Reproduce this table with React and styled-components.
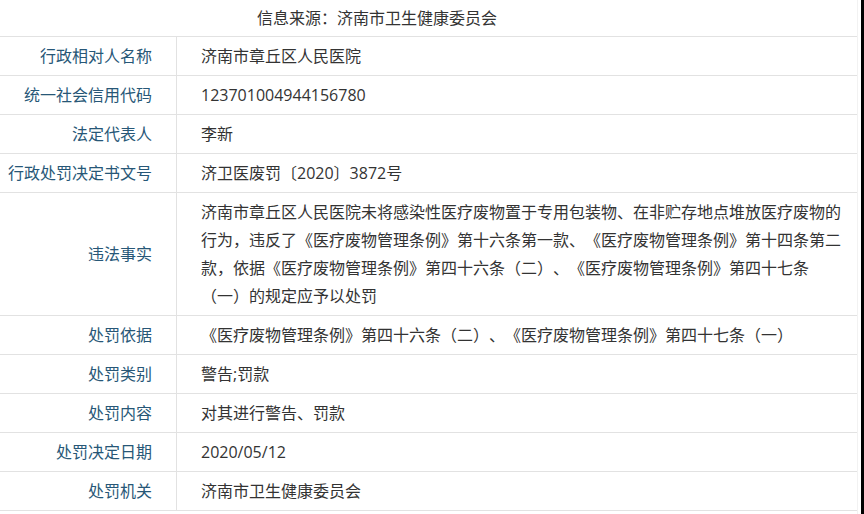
import React from "react";
import styled, { createGlobalStyle } from "styled-components";

const GlobalStyle = createGlobalStyle`
  html, body {
    margin: 0;
    padding: 0;
    background: #ffffff;
  }
  body {
    font-family: "Open Sans", "Noto Sans CJK SC", sans-serif;
    text-spacing-trim: space-all;
    font-kerning: none;
  }
`;

const Page = styled.div`
  width: 864px;
  height: 514px;
  box-sizing: border-box;
  border-right: 3px solid #000;
  overflow: hidden;
  display: flex;
  background: #fff;
`;

const Table = styled.div`
  width: 857px;
  border-right: 1px solid #f2f2f2;
  display: flex;
  flex-direction: column;
`;

const Header = styled.div`
  height: 36px;
  border-bottom: 1px solid #e2e2e2;
  display: flex;
  align-items: center;
  padding-left: 257px;
  font-size: 16px;
  color: #333;
  line-height: 28px;
`;

const Row = styled.div`
  display: grid;
  grid-template-columns: 177px 1fr;
  border-bottom: 1px solid #e2e2e2;
`;

const Label = styled.div`
  border-right: 1px solid #e2e2e2;
  padding: 5px 24px 5px 0;
  display: flex;
  align-items: center;
  justify-content: flex-end;
  font-size: 16px;
  line-height: 28px;
  color: #275777;
  white-space: nowrap;
`;

const Value = styled.div`
  padding: 5px 12px 5px 24px;
  font-size: 16px;
  line-height: 28px;
  color: #333;
  word-break: break-all;
  line-break: strict;
  text-spacing-trim: space-all;
`;

const rows = [
  ["行政相对人名称", "济南市章丘区人民医院"],
  ["统一社会信用代码", "123701004944156780"],
  ["法定代表人", "李新"],
  ["行政处罚决定书文号", "济卫医废罚〔2020〕3872号"],
  [
    "违法事实",
    "济南市章丘区人民医院未将感染性医疗废物置于专用包装物、在非贮存地点堆放医疗废物的行为，违反了《医疗废物管理条例》第十六条第一款、《医疗废物管理条例》第十四条第二款，依据《医疗废物管理条例》第四十六条（二）、《医疗废物管理条例》第四十七条（一）的规定应予以处罚",
  ],
  ["处罚依据", "《医疗废物管理条例》第四十六条（二）、《医疗废物管理条例》第四十七条（一）"],
  ["处罚类别", "警告;罚款"],
  ["处罚内容", "对其进行警告、罚款"],
  ["处罚决定日期", "2020/05/12"],
  ["处罚机关", "济南市卫生健康委员会"],
];

export default function App() {
  return (
    <>
      <GlobalStyle />
      <Page>
        <Table>
          <Header>信息来源：济南市卫生健康委员会</Header>
          {rows.map(([k, v]) => (
            <Row key={k}>
              <Label>{k}</Label>
              <Value>{v}</Value>
            </Row>
          ))}
        </Table>
      </Page>
    </>
  );
}
